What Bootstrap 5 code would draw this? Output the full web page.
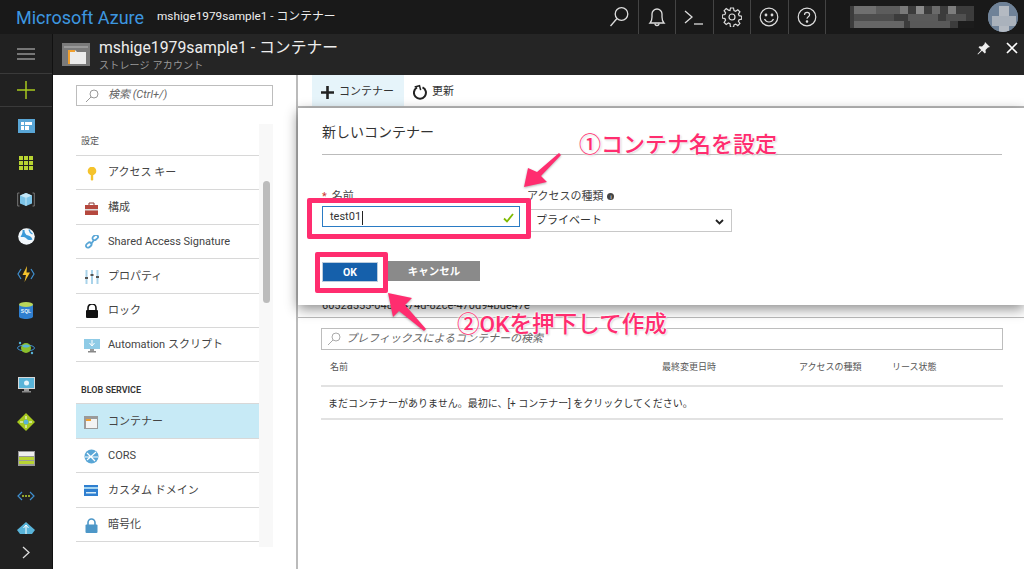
<!DOCTYPE html>
<html lang="ja">
<head>
    <meta charset="utf-8">
    <title>mshige1979sample1 - コンテナー</title>
    <link href="https://cdn.jsdelivr.net/npm/bootstrap@5.3.0/dist/css/bootstrap.min.css" rel="stylesheet">
    <style>
        html, body { width: 1024px; height: 569px; overflow: hidden; }
        body { font-family: Roboto, "Noto Sans CJK JP", sans-serif; font-size: 11px; color: #333; background: #fff; position: relative; }
        svg { display: block; flex: none; }

        .top-strip { height: 34px; background: #191919; color: #eee; }
        .brand-name { font-size: 18px; color: #3d97e0; margin-left: 16px; width: 140px; white-space: nowrap; }
        .crumb { font-size: 11.8px; margin-left: 1px; white-space: nowrap; }
        .top-cell { width: 37.5px; height: 34px; border-right: 1px solid #444; }
        .user-area { width: 198px; padding-left: 24px; }
        .avatar { width: 30px; height: 30px; border-radius: 50%; background: #7d8ea0; overflow: hidden; margin-left: 14px; }

        .page-body { height: 535px; }
        .side-rail { width: 53px; background: #212121; border-right: 1px solid #111; }
        .rail-head { height: 40px; border-bottom: 1px solid #3a3a3a; }
        .rail-add { height: 33px; border-bottom: 1px solid #3a3a3a; }
        .rail-item { height: 37px; }
        .rail-item.rail-last { height: 28px; }
        .rail-more { margin-top: 4px; }

        .blade-head { height: 41px; background: #252525; color: #eee; padding-left: 9px; }
        .blade-icon { margin-top: 9px; margin-right: 9px; }
        .blade-title { font-size: 15.8px; line-height: 20px; margin-top: 4px; white-space: nowrap; }
        .blade-sub { font-size: 10px; line-height: 13px; margin-top: 1px; color: #999; letter-spacing: .2px; }
        .blade-tools { margin-left: auto; padding-right: 6px; }

        .blade-main { height: 494px; }
        .menu-blade { width: 245px; border-right: 2px solid #bbb; padding: 10px 0 0 23px; }
        .find-box { border: 1px solid #bdbdbd; height: 21px; padding-left: 8px; font-style: italic; color: #666; font-size: 11px; }
        .menu-search { width: 197px; margin-bottom: 18px; gap: 9px; }
        .menu-scroll { height: 423px; }
        .menu-list { width: 183px; }
        .menu-track { width: 14px; background: #f8f8f8; padding: 57px 0 0 4px; }
        .menu-thumb { width: 7px; height: 122px; border-radius: 4px; background: #bcbcbc; }
        .group-title { height: 32px; font-size: 9px; color: #555; padding: 0 0 7px 5px; border-bottom: 1px solid #d8d8d8; }
        .group-blob { height: 42px; font-weight: 600; color: #333; padding-bottom: 6px; }
        .menu-row { height: 34.4px; border-bottom: 1px solid #d8d8d8; padding: 2px 0 0 8px; gap: 8px; font-size: 11px; color: #444; }
        .menu-row.current { background: #c7eaf6; }
        .menu-icon { width: 16px; }

        .content-pane { padding: 0 21px 0 23px; }
        .cmd-bar { height: 33px; border-bottom: 2px solid #bbb; margin-right: -21px; margin-left: -23px; padding-left: 14px; font-size: 11px; }
        .cmd-btn { height: 100%; padding: 3px 9px 0; gap: 5px; }
        .cmd-btn.active-cmd { width: 92px; background: #e6f4fa; }
        .cmd-id { height: 210px; font-size: 11px; padding-top: 190px; border-bottom: 1px solid #bbb; margin: 0 -21px 10px -23px; padding-left: 24px; }
        .filter-box { height: 22px; padding-left: 5px; gap: 5px; }
        .grid-head { height: 37px; font-size: 9px; color: #555; border-bottom: 2px solid #e2e2e2; }
        .grid-row { height: 33px; font-size: 10px; color: #333; padding: 1px 0 0 7px; border-bottom: 2px solid #e2e2e2; }
        .col-name { width: 341px; padding-left: 9px; }
        .col-date { width: 137px; }
        .col-kind { width: 93px; }

        .dialog-sheet { position: absolute; left: 298px; top: 108px; width: 726px; height: 197px; background: #fff; box-shadow: 0 4px 12px rgba(0,0,0,.45); padding: 14px 22px 0 24px; }
        .dialog-title { font-size: 14px; color: #333; height: 33px; border-bottom: 1px solid #bbb; }
        .field-row { margin-top: 32px; }
        .field-name { width: 205px; }
        .field-kind { width: 205px; }
        .field-label { font-size: 11px; height: 19px; line-height: 19px; color: #444; white-space: nowrap; }
        .req-mark { color: #c33; margin-right: 5px; }
        .name-input { height: 21px; width: 198px; border: 1px solid #2a7bc4; padding: 2px 5px 0 7px; font-size: 11px; }
        .caret-bar { width: 1px; height: 14px; background: #222; margin-left: 1px; }
        .kind-select { height: 23px; margin-top: 3px; border: 1px solid #c8c8c8; padding: 2px 7px 0 8px; font-size: 11px; }
        .info-dot { display: inline-block; width: 7px; height: 7px; border-radius: 50%; background: #444; color: #fff; font-size: 6px; line-height: 7px; text-align: center; margin-left: 4px; vertical-align: 1px; }
        .btn-row { margin-top: 29px; }
        .ok-btn { width: 56px; height: 20px; margin-top: 1px; background: #1560ab; color: #fff; font-weight: 700; font-size: 10.5px; border: 1px solid #bcd; border-radius: 0; padding: 2px 0 0; line-height: 1; }
        .cancel-btn { width: 92px; height: 20px; margin-left: 10px; background: #8a8a8a; color: #fff; font-weight: 700; font-size: 10.5px; border: 0; border-radius: 0; padding: 2px 0 0; line-height: 1; }

        .pink-frame { position: absolute; border: 5px solid #ff2d6f; border-radius: 2px; }
        .frame-name { left: 307px; top: 198px; width: 224px; height: 41px; }
        .frame-ok { left: 315px; top: 252px; width: 73px; height: 41px; }
        .arrow-layer { position: absolute; left: 0; top: 0; filter: drop-shadow(0 1px 1px rgba(0,0,0,.3)); }
        .note-text { position: absolute; color: #ff2d6f; font-weight: 500; white-space: nowrap; line-height: 1; text-shadow: 0 0 2px #fff, 0 0 2px #fff, 0 0 3px #fff, 1px 1px 2px rgba(0,0,0,.25); }
        .note-one { left: 579px; top: 134px; font-size: 22px; }
        .note-two { left: 457px; top: 314px; font-size: 22.6px; }
        .sql-label { font-family: "Liberation Sans", sans-serif; font-size: 5px; font-weight: 700; fill: #e6f4fa; }
    </style>
</head>
<body>
    <div class="top-strip d-flex align-items-center">
        <div class="brand-name">Microsoft Azure</div>
        <div class="crumb">mshige1979sample1 - コンテナー</div>
        <div class="d-flex ms-auto">
            <div class="top-cell d-flex align-items-center justify-content-center">
                <svg width="22" height="22" viewBox="0 0 22 22" fill="none" stroke="#ddd" stroke-width="1.3"><circle cx="13.5" cy="8" r="6.3"/><path d="M9 12.5 2.5 20"/></svg>
            </div>
            <div class="top-cell d-flex align-items-center justify-content-center">
                <svg width="20" height="22" viewBox="0 0 20 22" fill="none" stroke="#ddd" stroke-width="1.3"><path d="M3 17c1.500-1.500 2-3 2-6V8a5 5 0 0 1 10 0v3c0 3 .5 4.500 2 6z"/><path d="M8 17.500a2 2 0 0 0 4 0"/></svg>
            </div>
            <div class="top-cell d-flex align-items-center justify-content-center">
                <svg width="20" height="18" viewBox="0 0 20 18" fill="none" stroke="#ddd" stroke-width="1.3"><path d="M1 3l7 6-7 6"/><path d="M10 16h9"/></svg>
            </div>
            <div class="top-cell d-flex align-items-center justify-content-center">
                <svg width="20" height="20" viewBox="0 0 20 20" fill="none" stroke="#ddd" stroke-width="1.2"><circle cx="10" cy="10" r="3"/><path d="M8.500 1h3l.5 2.600 1.600.7 2.200-1.500 2.100 2.100-1.500 2.200.7 1.600 2.600.5v3l-2.600.5-.7 1.600 1.500 2.200-2.100 2.100-2.200-1.500-1.600.7-.5 2.600h-3L8 16.700l-1.600-.7-2.200 1.500-2.100-2.100 1.500-2.200-.7-1.600L.3 11V8l2.600-.5.7-1.600-1.500-2.200 2.100-2.100 2.200 1.500L8 3.600z"/></svg>
            </div>
            <div class="top-cell d-flex align-items-center justify-content-center">
                <svg width="20" height="20" viewBox="0 0 20 20" fill="none" stroke="#ddd" stroke-width="1.2"><circle cx="10" cy="10" r="8.800"/><circle cx="7" cy="8" r=".8" fill="#ddd"/><circle cx="13" cy="8" r=".8" fill="#ddd"/><path d="M5.500 12c1 2 2.700 3 4.500 3s3.500-1 4.500-3"/></svg>
            </div>
            <div class="top-cell d-flex align-items-center justify-content-center">
                <svg width="20" height="20" viewBox="0 0 20 20" fill="none" stroke="#ddd" stroke-width="1.2"><circle cx="10" cy="10" r="8.800"/><path d="M7.500 8c0-1.600 1.100-2.600 2.600-2.600s2.500 1 2.500 2.300c0 2-2.600 2-2.600 4.100"/><circle cx="10" cy="14.500" r=".7" fill="#ddd"/></svg>
            </div>
            <div class="user-area d-flex align-items-center">
                <svg width="124" height="26" viewBox="0 0 124 26">
                    <rect x="0" y="2" width="124" height="22" fill="#3c3c3c"/>
                    <rect x="4" y="2" width="22" height="8" fill="#6f6f6f"/><rect x="26" y="2" width="24" height="8" fill="#5c5c5c"/><rect x="50" y="2" width="8" height="8" fill="#7a7a7a"/><rect x="66" y="2" width="8" height="8" fill="#8a8a8a"/><rect x="82" y="2" width="8" height="8" fill="#6a6a6a"/><rect x="98" y="2" width="8" height="8" fill="#7d7d7d"/>
                    <rect x="4" y="10" width="40" height="7" fill="#4d4d4d"/><rect x="58" y="10" width="30" height="7" fill="#5a5a5a"/><rect x="96" y="10" width="20" height="7" fill="#505050"/>
                    <rect x="4" y="17" width="50" height="7" fill="#666"/><rect x="60" y="17" width="40" height="7" fill="#595959"/><rect x="108" y="17" width="16" height="7" fill="#1c1c1c"/>
                </svg>
                <div class="avatar d-flex align-items-center justify-content-center">
                    <svg width="30" height="30" viewBox="0 0 30 30"><rect width="30" height="30" fill="#6f8298"/><rect x="11" y="4" width="10" height="26" fill="#b4bac2"/><rect x="4" y="14" width="24" height="10" fill="#aab2bc"/></svg>
                </div>
            </div>
        </div>
    </div>

    <div class="page-body d-flex">
        <div class="side-rail d-flex flex-column">
            <div class="rail-head d-flex align-items-center justify-content-center">
                <svg width="18" height="12" viewBox="0 0 18 12" stroke="#ccc" stroke-width="1.2"><path d="M0 1h18M0 6h18M0 11h18"/></svg>
            </div>
            <div class="rail-add d-flex align-items-center justify-content-center">
                <svg width="18" height="18" viewBox="0 0 18 18" stroke="#a6c81e" stroke-width="1.5"><path d="M0 9h18M9 0v18"/></svg>
            </div>
            <div class="rail-item d-flex align-items-center justify-content-center">
                <svg width="17" height="14" viewBox="0 0 17 14"><rect width="17" height="14" fill="#59a6d6"/><rect x="3" y="3" width="3" height="3" fill="#fff"/><rect x="7" y="3" width="7" height="3" fill="#fff"/><rect x="3" y="7" width="3" height="4" fill="#fff"/><rect x="7" y="7" width="4" height="4" fill="#fff"/></svg>
            </div>
            <div class="rail-item d-flex align-items-center justify-content-center">
                <svg width="14" height="14" viewBox="0 0 14 14" fill="#b8d432"><rect width="4" height="4"/><rect x="5" width="4" height="4"/><rect x="10" width="4" height="4"/><rect y="5" width="4" height="4"/><rect x="5" y="5" width="4" height="4"/><rect x="10" y="5" width="4" height="4"/><rect y="10" width="4" height="4"/><rect x="5" y="10" width="4" height="4"/><rect x="10" y="10" width="4" height="4"/></svg>
            </div>
            <div class="rail-item d-flex align-items-center justify-content-center">
                <svg width="18" height="15" viewBox="0 0 18 15"><path d="M9 1l6 2.500v8L9 14l-6-2.500v-8z" fill="#7cc4e8"/><path d="M3 3.500 9 6l6-2.500L9 1z" fill="#c4e6f6"/><path d="M9 6v8" stroke="#d6eef8" stroke-width=".8"/><path d="M2.500 1H.7v13h1.800M15.500 1h1.800v13h-1.800" stroke="#777" fill="none"/></svg>
            </div>
            <div class="rail-item d-flex align-items-center justify-content-center">
                <svg width="17" height="17" viewBox="0 0 17 17"><circle cx="8.500" cy="8.500" r="8.300" fill="#f2f8fc"/><path d="M4.500 2c.5 3-1 5-2 7 2.500 0 4-.5 6 1.500 1 1.500 3 2 6 1-1-3-3.500-4-6-4.500-1.500-1.500-2-3-2-5z" fill="#3a9ad9"/><path d="M11 1.500c.5 2 1 3.500 3.500 4.500" stroke="#3a9ad9" stroke-width="1.300" fill="none"/></svg>
            </div>
            <div class="rail-item d-flex align-items-center justify-content-center">
                <svg width="18" height="16" viewBox="0 0 18 16"><path d="M4 3 1 8l3 5M14 3l3 5-3 5" stroke="#3f8fcf" stroke-width="1.200" fill="none"/><path d="M10 0 5.500 9H9l-1.500 7L13 6.500H9.500z" fill="#f5c32c"/></svg>
            </div>
            <div class="rail-item d-flex align-items-center justify-content-center">
                <svg width="14" height="17" viewBox="0 0 14 17"><path d="M0 2.500v12c0 1.400 3.100 2.500 7 2.500s7-1.100 7-2.500v-12z" fill="#2f7fd0"/><ellipse cx="7" cy="2.500" rx="7" ry="2.500" fill="#b9d65a"/><text class="sql-label" x="7" y="11" text-anchor="middle">SQL</text></svg>
            </div>
            <div class="rail-item d-flex align-items-center justify-content-center">
                <svg width="18" height="16" viewBox="0 0 18 16"><ellipse cx="9" cy="8" rx="8.500" ry="3" fill="none" stroke="#3c8dcb"/><circle cx="9" cy="8" r="5" fill="#8bbf2c"/><path d="M5 6c2-2 6-2 8 0-2 2-6 2-8 0z" fill="#59b4d9"/><circle cx="3" cy="3" r="1.200" fill="#59b4d9"/><circle cx="15" cy="13" r="1.200" fill="#59b4d9"/></svg>
            </div>
            <div class="rail-item d-flex align-items-center justify-content-center">
                <svg width="17" height="16" viewBox="0 0 17 16"><rect width="17" height="12" fill="#d8d8d8"/><rect x="1" y="1" width="15" height="10" fill="#59b4d9"/><circle cx="8.500" cy="6" r="2.500" fill="#e6f4fa"/><rect x="6" y="12" width="5" height="2" fill="#999"/><rect x="4" y="14" width="9" height="1.500" fill="#888"/></svg>
            </div>
            <div class="rail-item d-flex align-items-center justify-content-center">
                <svg width="18" height="18" viewBox="0 0 18 18"><path d="M9 0l9 9-9 9-9-9z" fill="#a6c81e"/><circle cx="9" cy="9" r="2.500" fill="#59b4d9"/><path d="M9 3v3M9 12v3M3 9h3M12 9h3" stroke="#fff"/></svg>
            </div>
            <div class="rail-item d-flex align-items-center justify-content-center">
                <svg width="17" height="15" viewBox="0 0 17 15"><rect width="17" height="15" fill="#999"/><rect x="1" y="1" width="15" height="4" fill="#eee"/><rect x="1" y="6" width="15" height="3" fill="#b8d432"/><rect x="1" y="10" width="15" height="3" fill="#b8d432"/></svg>
            </div>
            <div class="rail-item d-flex align-items-center justify-content-center">
                <svg width="18" height="10" viewBox="0 0 18 10"><path d="M5 1 1 5l4 4M13 1l4 4-4 4" stroke="#3f8fcf" stroke-width="1.200" fill="none"/><circle cx="6" cy="5" r="1" fill="#b8d432"/><circle cx="9" cy="5" r="1" fill="#b8d432"/><circle cx="12" cy="5" r="1" fill="#b8d432"/></svg>
            </div>
            <div class="rail-item rail-last d-flex align-items-center justify-content-center">
                <svg width="18" height="13" viewBox="0 0 18 13"><path d="M9 0l9 8-3 4H3L0 8z" fill="#59b4d9"/><path d="M9 3v9M6.500 6 9 3l2.500 3" stroke="#fff" fill="none"/></svg>
            </div>
            <div class="rail-more d-flex justify-content-center">
                <svg width="8" height="13" viewBox="0 0 8 13" fill="none" stroke="#ddd" stroke-width="1.300"><path d="M1 1l6 5.500L1 12"/></svg>
            </div>
        </div>

        <div class="flex-grow-1 d-flex flex-column">
            <div class="blade-head d-flex">
                <svg class="blade-icon" width="28" height="23" viewBox="0 0 28 23"><rect width="28" height="23" fill="#7a7a7a"/><rect x="2" y="3" width="24" height="2" fill="#999"/><path d="M6 7h7l2 2h9v12H6z" fill="#ececec"/><path d="M6 7h2v14H6zM6 7h7v2H6z" fill="#f0a030"/></svg>
                <div>
                    <div class="blade-title">mshige1979sample1 - コンテナー</div>
                    <div class="blade-sub">ストレージ アカウント</div>
                </div>
                <div class="blade-tools d-flex gap-3 align-items-start pt-2">
                    <svg width="13" height="13" viewBox="0 0 13 13" fill="#eee"><path d="M8 0l5 5-2 .5-2.500 2.500.3 2.500-1 1L5 8.800 1 12.500.5 12l3.700-4L1.500 5.200l1-1L5 4.500 7.500 2z"/></svg>
                    <svg width="12" height="12" viewBox="0 0 12 12" stroke="#fff" stroke-width="1.700"><path d="M1 1l10 10M11 1 1 11"/></svg>
                </div>
            </div>

            <div class="blade-main d-flex">
                <div class="menu-blade flex-none">
                    <div class="find-box menu-search d-flex align-items-center">
                        <svg width="14" height="14" viewBox="0 0 14 14" fill="none" stroke="#999"><circle cx="9" cy="5" r="4"/><path d="M6 8l-5 5"/></svg>
                        <span>検索 (Ctrl+/)</span>
                    </div>
                    <div class="menu-scroll d-flex">
                        <div class="menu-list">
                            <div class="group-title d-flex align-items-end">設定</div>
                            <div class="menu-row d-flex align-items-center">
                                <svg class="menu-icon" width="16" height="14" viewBox="0 0 16 14"><circle cx="8" cy="4" r="4.300" fill="#f5c32c"/><path d="M6.800 6h2.400v6.500L8 14l-1.200-1.500z" fill="#f5c32c"/></svg>
                                <span>アクセス キー</span>
                            </div>
                            <div class="menu-row d-flex align-items-center">
                                <svg class="menu-icon" width="16" height="13" viewBox="0 0 16 13"><path d="M5 3V1h5v2" fill="none" stroke="#8a3a34"/><rect x="1" y="3" width="13" height="10" fill="#b5483e"/><rect x="1" y="7" width="13" height="1.500" fill="#ddd"/></svg>
                                <span>構成</span>
                            </div>
                            <div class="menu-row d-flex align-items-center">
                                <svg class="menu-icon" width="16" height="14" viewBox="0 0 16 14" fill="none" stroke="#59a6d6" stroke-width="1.800"><path d="M7 9 10 5"/><rect x="8.500" y=".8" width="6" height="4" rx="2" transform="rotate(-40 11 3)"/><rect x="1.500" y="8.500" width="6" height="4" rx="2" transform="rotate(-40 4 10)"/></svg>
                                <span>Shared Access Signature</span>
                            </div>
                            <div class="menu-row d-flex align-items-center">
                                <svg class="menu-icon" width="16" height="14" viewBox="0 0 16 14"><path d="M2.500 0v14M8 0v14M13.500 0v14" stroke="#a9d3ea" stroke-width="2"/><rect x="1" y="7" width="3" height="2" fill="#555"/><rect x="6.500" y="4" width="3" height="2" fill="#555"/><rect x="12" y="6" width="3" height="2" fill="#555"/></svg>
                                <span>プロパティ</span>
                            </div>
                            <div class="menu-row d-flex align-items-center">
                                <svg class="menu-icon" width="16" height="14" viewBox="0 0 16 14"><path d="M4 6V4a4 4 0 0 1 8 0v2" fill="none" stroke="#111" stroke-width="1.600"/><rect x="2" y="6" width="12" height="8" rx="1" fill="#111"/></svg>
                                <span>ロック</span>
                            </div>
                            <div class="menu-row d-flex align-items-center">
                                <svg class="menu-icon" width="16" height="14" viewBox="0 0 16 14"><rect width="16" height="10" fill="#8fcbe6"/><path d="M8 1v5M5.500 4 8 7l2.500-3" stroke="#fff" fill="none"/><rect x="6" y="10" width="4" height="2" fill="#999"/><rect x="4" y="12" width="8" height="1.500" fill="#888"/></svg>
                                <span>Automation スクリプト</span>
                            </div>
                            <div class="group-title group-blob d-flex align-items-end">BLOB SERVICE</div>
                            <div class="menu-row current d-flex align-items-center">
                                <svg class="menu-icon" width="16" height="13" viewBox="0 0 16 13"><rect width="14" height="13" fill="#9a9a9a"/><rect x="2" y="3" width="11" height="9" fill="#f3f3f3"/><rect x="2" y="3" width="5" height="2" fill="#f0a030"/></svg>
                                <span>コンテナー</span>
                            </div>
                            <div class="menu-row d-flex align-items-center">
                                <svg class="menu-icon" width="16" height="15" viewBox="0 0 16 15"><circle cx="7.500" cy="7.500" r="7" fill="#59a6d6"/><path d="M3 4l8 8M12 3 3 11M1 8h13" stroke="#fff" stroke-width="1.200"/></svg>
                                <span>CORS</span>
                            </div>
                            <div class="menu-row d-flex align-items-center">
                                <svg class="menu-icon" width="16" height="13" viewBox="0 0 16 13"><rect y="1" width="14" height="11" fill="#2f7fd0"/><rect y="3" width="14" height="2" fill="#a5d5f0"/><rect x="2" y="8" width="10" height="1.500" fill="#d6ecf8"/></svg>
                                <span>カスタム ドメイン</span>
                            </div>
                            <div class="menu-row d-flex align-items-center">
                                <svg class="menu-icon" width="16" height="15" viewBox="0 0 16 15"><path d="M4 7V4.500a3.500 3.500 0 0 1 7 0V7" fill="none" stroke="#4d97c8" stroke-width="1.600"/><rect x="1.500" y="6.500" width="12" height="8.500" rx="1" fill="#4d97c8"/></svg>
                                <span>暗号化</span>
                            </div>
                        </div>
                        <div class="menu-track"><div class="menu-thumb"></div></div>
                    </div>
                </div>

                <div class="content-pane flex-grow-1">
                    <div class="cmd-bar d-flex align-items-stretch">
                        <div class="cmd-btn active-cmd d-flex align-items-center">
                            <svg width="13" height="13" viewBox="0 0 13 13" stroke="#222" stroke-width="2.600"><path d="M0 6.500h13M6.500 0v13"/></svg>
                            <span>コンテナー</span>
                        </div>
                        <div class="cmd-btn d-flex align-items-center">
                            <svg width="14" height="16" viewBox="0 0 14 16" fill="none" stroke="#222" stroke-width="2"><path d="M9.500 3.300a6 6 0 1 1-5.500.2"/><path d="M2 2.500h5V7" stroke-width="1.500" transform="rotate(-15 4 4)"/></svg>
                            <span>更新</span>
                        </div>
                    </div>
                    <div class="cmd-id">6052a555-048c-474d-82ce-470d94bde47e</div>
                    <div class="find-box filter-box d-flex align-items-center">
                        <svg width="14" height="14" viewBox="0 0 14 14" fill="none" stroke="#aaa"><circle cx="9" cy="5" r="4"/><path d="M6 8l-5 5"/></svg>
                        <span>プレフィックスによるコンテナーの検索</span>
                    </div>
                    <div class="grid-head d-flex align-items-center">
                        <div class="col-name">名前</div>
                        <div class="col-date">最終変更日時</div>
                        <div class="col-kind">アクセスの種類</div>
                        <div>リース状態</div>
                    </div>
                    <div class="grid-row d-flex align-items-center">まだコンテナーがありません。最初に、[+ コンテナー] をクリックしてください。</div>
                </div>
            </div>
        </div>
    </div>

    <div class="dialog-sheet">
        <div class="dialog-title">新しいコンテナー</div>
        <div class="field-row d-flex">
            <div class="field-name">
                <div class="field-label"><span class="req-mark">*</span>名前</div>
                <div class="name-input d-flex align-items-center">
                    <span>test01</span><span class="caret-bar"></span>
                    <svg class="ms-auto" width="11" height="10" viewBox="0 0 11 10" fill="none" stroke="#7fba00" stroke-width="1.800"><path d="M1 5.500 4 8.500 10 1"/></svg>
                </div>
            </div>
            <div class="field-kind">
                <div class="field-label">アクセスの種類<span class="info-dot">i</span></div>
                <div class="kind-select d-flex align-items-center justify-content-between">
                    <span>プライベート</span>
                    <svg width="9" height="6" viewBox="0 0 9 6" fill="none" stroke="#222" stroke-width="1.800"><path d="M1 1l3.500 3.500L8 1"/></svg>
                </div>
            </div>
        </div>
        <div class="btn-row d-flex">
            <button type="button" class="btn ok-btn">OK</button>
            <button type="button" class="btn cancel-btn">キャンセル</button>
        </div>
    </div>

    <div class="pink-frame frame-name"></div>
    <div class="pink-frame frame-ok"></div>
    <svg class="arrow-layer" width="1024" height="569" viewBox="0 0 1024 569" fill="#ff2d6f">
        <polygon points="524,187 528,168 537,172 559,153 561,155 541,176 547,182"/>
        <polygon points="388,293 412,298 405,305 426,329 424,331 399,311 393,317"/>
    </svg>
    <div class="note-text note-one">①コンテナ名を設定</div>
    <div class="note-text note-two">②OKを押下して作成</div>

    <script src="https://cdn.jsdelivr.net/npm/bootstrap@5.3.0/dist/js/bootstrap.bundle.min.js"></script>
</body>
</html>
